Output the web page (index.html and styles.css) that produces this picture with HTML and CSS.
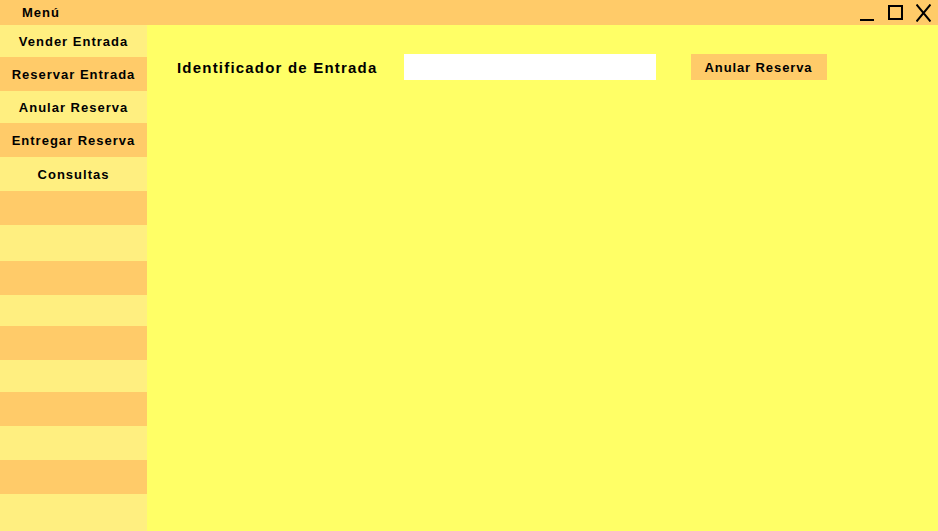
FILE: index.html
```html
<!DOCTYPE html>
<html lang="es">
<head>
<meta charset="utf-8">
<title>Anular Reserva</title>
<link rel="stylesheet" href="styles.css">
</head>
<body>
<div class="window">
  <header class="titlebar">
    <span class="title">Menú</span>
    <div class="controls">
      <svg class="ctl" width="14" height="18" viewBox="0 0 14 18"><path d="M0 16H14" stroke="#000" stroke-width="2"/></svg>
      <svg class="ctl" width="15" height="18" viewBox="0 0 15 18"><rect x="1" y="2" width="13" height="13" fill="none" stroke="#000" stroke-width="2"/></svg>
      <svg class="ctl" width="15" height="18" viewBox="0 0 15 18"><path d="M0.5 0.5L14.5 17.5M14.5 0.5L0.5 17.5" stroke="#000" stroke-width="2"/></svg>
    </div>
  </header>
  <div class="content">
    <nav class="sidebar">
      <div class="item light">Vender Entrada</div>
      <div class="item dark">Reservar Entrada</div>
      <div class="item light">Anular Reserva</div>
      <div class="item dark">Entregar Reserva</div>
      <div class="item light">Consultas</div>
      <div class="item dark"></div>
      <div class="item light"></div>
      <div class="item dark"></div>
      <div class="item light"></div>
      <div class="item dark"></div>
      <div class="item light"></div>
      <div class="item dark"></div>
      <div class="item light"></div>
      <div class="item dark"></div>
      <div class="item light"></div>
    </nav>
    <main class="main">
      <div class="form-row">
        <label class="label" for="id">Identificador de Entrada</label>
        <input class="field" id="id" type="text">
        <button class="btn">Anular Reserva</button>
      </div>
    </main>
  </div>
</div>
</body>
</html>
```

FILE: styles.css
```css
html, body {
  margin: 0;
  padding: 0;
  height: 100%;
}
body {
  font-family: "Liberation Sans", Arial, sans-serif;
  color: #000;
  background: #ffff66;
}
.window {
  display: flex;
  flex-direction: column;
  width: 938px;
  height: 531px;
}
.titlebar {
  height: 25px;
  flex: none;
  background: #ffcb69;
  display: flex;
  align-items: center;
  justify-content: space-between;
}
.title {
  font-weight: bold;
  font-size: 13px;
  letter-spacing: 1px;
  padding-left: 22px;
}
.controls {
  display: flex;
  align-self: flex-start;
  padding-top: 4px;
  padding-right: 7px;
}
.ctl {
  display: block;
}
.ctl + .ctl {
  margin-left: 14px;
}
.ctl:last-child {
  margin-left: 13px;
}
.content {
  flex: 1;
  display: flex;
  min-height: 0;
}
.sidebar {
  width: 147px;
  flex: none;
  display: grid;
  grid-template-rows: 32px 34px 32px 34px 34px 34px 36px 34px 31px 34px 32px 34px 34px 34px 1fr;
}
.item {
  display: flex;
  align-items: center;
  justify-content: center;
  font-weight: bold;
  font-size: 13px;
  letter-spacing: 1px;
  white-space: nowrap;
}
.item.light { background: #ffef80; }
.item.dark { background: #ffcb69; }
.main {
  flex: 1;
  background: #ffff66;
  padding: 29px 0 0 30px;
}
.form-row {
  display: flex;
  align-items: center;
}
.label {
  font-weight: bold;
  font-size: 15px;
  letter-spacing: 1.2px;
  margin-right: 26px;
}
.field {
  width: 252px;
  height: 26px;
  box-sizing: border-box;
  border: none;
  background: #fff;
  margin: 0 35px 0 0;
  padding: 0;
}
.btn {
  width: 136px;
  height: 26px;
  box-sizing: border-box;
  border: none;
  background: #ffcb69;
  font-family: "Liberation Sans", Arial, sans-serif;
  font-weight: bold;
  font-size: 13px;
  letter-spacing: 0.9px;
  color: #000;
  padding: 0;
}
```
